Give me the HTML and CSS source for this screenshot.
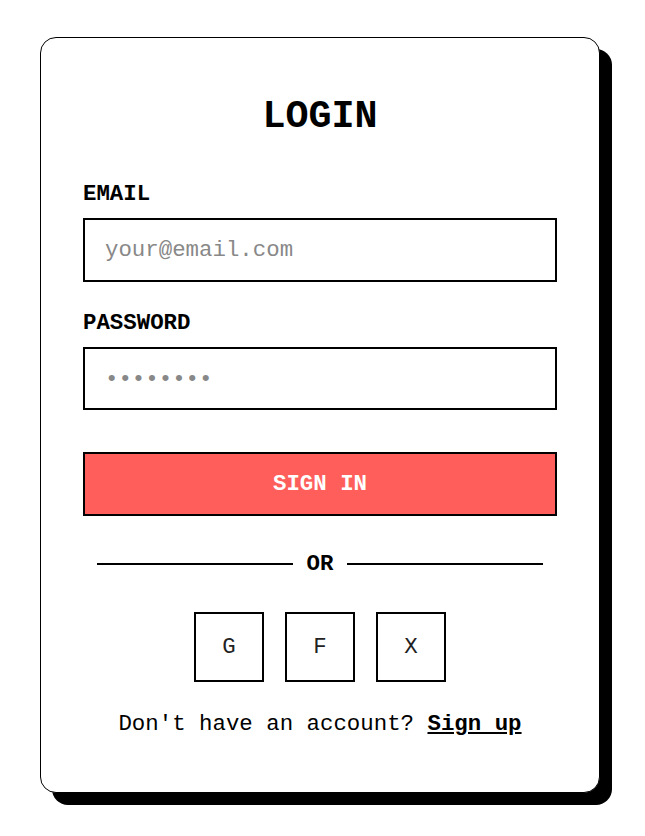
FILE: index.html
```html
<!DOCTYPE html>
<html lang="en">
<head>
<meta charset="utf-8">
<title>Login</title>
<link rel="stylesheet" href="styles.css">
</head>
<body>
<div class="page">
  <form class="card">
    <h1 class="title">LOGIN</h1>
    <label class="label" for="email">EMAIL</label>
    <input class="field" id="email" type="email" placeholder="your@email.com">
    <label class="label label-pw" for="pw">PASSWORD</label>
    <input class="field field-pw" id="pw" type="password" placeholder="••••••••">
    <button class="btn" type="button">SIGN IN</button>
    <div class="divider"><span class="line"></span><span class="or">OR</span><span class="line"></span></div>
    <div class="socials">
      <button class="social" type="button">G</button>
      <button class="social" type="button">F</button>
      <button class="social" type="button">X</button>
    </div>
    <p class="footer">Don't have an account? <a class="link" href="#">Sign up</a></p>
  </form>
</div>
</body>
</html>
```
FILE: styles.css
```css
* { box-sizing: border-box; }
html, body { margin: 0; background: #fff; }
body { font-family: "Courier New", Courier, "Liberation Mono", monospace; color: #000; font-size: 22.4px; }
.page { padding: 37px 0 44px 40px; }
.card {
  width: 560px;
  border: 1px solid #000;
  border-radius: 16px;
  box-shadow: 12px 12px 0 #000;
  background: #fff;
  padding: 42px 42px 55px;
  display: flex;
  flex-direction: column;
}
.title {
  margin: 15px 0 0;
  font-size: 38.4px;
  line-height: 44px;
  font-weight: bold;
  text-align: center;
}
.label {
  display: block;
  margin: 42px 0 11px;
  font-weight: bold;
  font-size: 22.4px;
  line-height: 26px;
}
.label-pw { margin-top: 28px; }
.field {
  display: block;
  width: 100%;
  height: 64px;
  border: 2px solid #000;
  border-radius: 0;
  padding: 0 20px;
  font-family: inherit;
  font-size: 22.4px;
  color: #000;
  outline: none;
  background: #fff;
}
.field-pw { height: 63px; }
.field::placeholder { color: #888; }
.btn {
  margin-top: 42px;
  height: 64px;
  width: 100%;
  background: #ff5e5b;
  border: 2px solid #000;
  color: #fff;
  font-family: inherit;
  font-weight: bold;
  font-size: 22.4px;
}
.divider {
  margin-top: 35px;
  height: 26px;
  display: flex;
  align-items: center;
  gap: 14px;
  padding: 0 14px;
}
.line { flex: 1; height: 2px; background: #000; }
.or { font-weight: bold; line-height: 26px; }
.socials {
  margin-top: 35px;
  display: flex;
  justify-content: center;
  gap: 21px;
}
.social {
  width: 70px;
  height: 70px;
  border: 2px solid #000;
  background: #fff;
  font-family: inherit;
  font-size: 22.4px;
  color: #222;
  padding: 0;
}
.footer {
  margin: 29px 0 0;
  text-align: center;
  line-height: 26px;
}
.link { color: #000; font-weight: bold; text-decoration: underline; }
```
